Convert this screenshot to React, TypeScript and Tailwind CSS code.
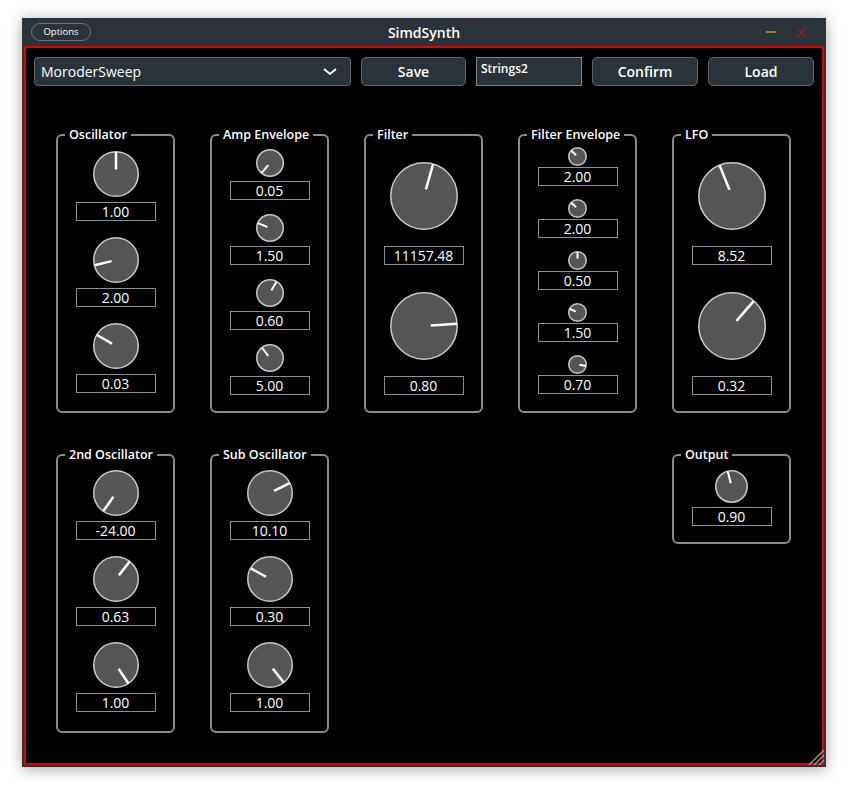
import React from 'react';

// Pointer angle is degrees clockwise from 12 o'clock
function Knob({ size, angle }: { size: number; angle: number }) {
    const r = size / 2;
    const rad = (angle * Math.PI) / 180;
    const x1 = r + Math.sin(rad) * r * 0.2;
    const y1 = r - Math.cos(rad) * r * 0.2;
    const x2 = r + Math.sin(rad) * (r - 1);
    const y2 = r - Math.cos(rad) * (r - 1);
    const sw = size > 40 ? 2.5 : 2;
    return (
        <svg width={size} height={size} viewBox={`0 0 ${size} ${size}`} className="shrink-0">
            <circle cx={r} cy={r} r={r - 0.75} fill="#555555" stroke="#c9c9c9" strokeWidth={1.5} />
            <line x1={x1} y1={y1} x2={x2} y2={y2} stroke="#ffffff" strokeWidth={sw} />
        </svg>
    );
}

function Value({ children }: { children: React.ReactNode }) {
    return (
        <div className="w-[80px] h-[19px] border border-[#8a9295] flex items-center justify-center text-[14px] leading-none font-medium text-white">
            {children}
        </div>
    );
}

function Param({ size, angle, value, gap }: { size: number; angle: number; value: string; gap: string }) {
    return (
        <div className={`flex flex-col items-center ${gap}`}>
            <Knob size={size} angle={angle} />
            <Value>{value}</Value>
        </div>
    );
}

function Panel({ title, className, children }: { title: string; className: string; children: React.ReactNode }) {
    return (
        <fieldset className={`border-2 border-[#868d91] rounded-[6px] ${className}`}>
            <legend className="ml-[7px] px-[4px] text-[12.5px] leading-[16px] font-semibold text-white">{title}</legend>
            {children}
        </fieldset>
    );
}

function Button({ label }: { label: string }) {
    return (
        <button className="w-[106px] h-[29px] rounded-[5px] bg-[#2a3339] border border-[#5d656a] text-[14px] font-semibold text-white">
            {label}
        </button>
    );
}

export default function App() {
    return (
        <div className="min-h-[794px] bg-white pt-[18px] pl-[22px] font-['Open_Sans',sans-serif]">
            <div className="relative w-[804px] h-[749px] bg-[#2a3339] shadow-[0_2px_14px_rgba(0,0,0,0.35)] flex flex-col">
                {/* Title bar */}
                <div className="h-[28px] shrink-0 grid grid-cols-[1fr_auto_1fr] items-center px-[9px]">
                    <button className="justify-self-start w-[60px] h-[18px] rounded-full border border-[#6b7378] text-[9.5px] font-medium text-white leading-none">
                        Options
                    </button>
                    <div className="text-[14px] font-semibold text-white">SimdSynth</div>
                    <div className="justify-self-end flex items-center gap-[20px] pr-[10px]">
                        <div className="w-[10px] h-[2px] bg-[#9a8620]" />
                        <svg width="11" height="11" viewBox="0 0 11 11">
                            <path d="M1 1 L10 10 M10 1 L1 10" stroke="#8a2022" strokeWidth="1.6" />
                        </svg>
                    </div>
                </div>

                {/* Content */}
                <div className="flex-1 mx-[2px] mb-[2px] border-2 border-[#e30000] bg-black flex flex-col">
                    <div className="flex gap-[10px] pt-[9px] px-[8px]">
                        <div className="w-[317px] h-[29px] rounded-[4px] bg-[#2a3339] border border-[#5d656a] flex items-center justify-between pl-[6px] pr-[13px]">
                            <span className="text-[14px] font-medium text-white">MoroderSweep</span>
                            <svg width="14" height="7" viewBox="0 0 14 7">
                                <path d="M1 1 L7 6 L13 1" fill="none" stroke="#ffffff" strokeWidth="1.8" />
                            </svg>
                        </div>
                        <button className="w-[105px] h-[29px] rounded-[5px] bg-[#2a3339] border border-[#5d656a] text-[14px] font-semibold text-white">
                            Save
                        </button>
                        <div className="w-[106px] h-[29px] bg-[#2a3339] border border-[#7d8589] px-[4px] pt-[3px] text-[12px] font-semibold text-white leading-[16px]">
                            Strings2
                        </div>
                        <Button label="Confirm" />
                        <Button label="Load" />
                    </div>

                    <div className="ml-[30px] mt-[41px] grid grid-cols-[repeat(5,119px)] gap-x-[35px] gap-y-[34px] items-start">
                        <Panel title="Oscillator" className="h-[286px] flex flex-col items-center gap-[16px] pt-[8px]">
                            <Param size={46} angle={0} value="1.00" gap="gap-[5px]" />
                            <Param size={46} angle={-104} value="2.00" gap="gap-[5px]" />
                            <Param size={46} angle={-60} value="0.03" gap="gap-[5px]" />
                        </Panel>
                        <Panel title="Amp Envelope" className="h-[286px] flex flex-col items-center gap-[14px] pt-[6px]">
                            <Param size={28} angle={-140} value="0.05" gap="gap-[4px]" />
                            <Param size={28} angle={-68} value="1.50" gap="gap-[4px]" />
                            <Param size={28} angle={30} value="0.60" gap="gap-[4px]" />
                            <Param size={28} angle={-38} value="5.00" gap="gap-[4px]" />
                        </Panel>
                        <Panel title="Filter" className="h-[286px] flex flex-col items-center gap-[27px] pt-[19px]">
                            <Param size={68} angle={16} value="11157.48" gap="gap-[16px]" />
                            <Param size={68} angle={86} value="0.80" gap="gap-[16px]" />
                        </Panel>
                        <Panel title="Filter Envelope" className="h-[286px] flex flex-col items-center gap-[13px] pt-[4px]">
                            <Param size={19} angle={-47} value="2.00" gap="gap-[1px]" />
                            <Param size={19} angle={-47} value="2.00" gap="gap-[1px]" />
                            <Param size={19} angle={0} value="0.50" gap="gap-[1px]" />
                            <Param size={19} angle={-64} value="1.50" gap="gap-[1px]" />
                            <Param size={19} angle={100} value="0.70" gap="gap-[1px]" />
                        </Panel>
                        <Panel title="LFO" className="h-[286px] flex flex-col items-center gap-[27px] pt-[19px]">
                            <Param size={68} angle={-22} value="8.52" gap="gap-[16px]" />
                            <Param size={68} angle={41} value="0.32" gap="gap-[16px]" />
                        </Panel>

                        <Panel title="2nd Oscillator" className="h-[286px] flex flex-col items-center gap-[16px] pt-[7px]">
                            <Param size={46} angle={-145} value="-24.00" gap="gap-[5px]" />
                            <Param size={46} angle={38} value="0.63" gap="gap-[5px]" />
                            <Param size={46} angle={146} value="1.00" gap="gap-[5px]" />
                        </Panel>
                        <Panel title="Sub Oscillator" className="h-[286px] flex flex-col items-center gap-[16px] pt-[7px]">
                            <Param size={46} angle={63} value="10.10" gap="gap-[5px]" />
                            <Param size={46} angle={-61} value="0.30" gap="gap-[5px]" />
                            <Param size={46} angle={142} value="1.00" gap="gap-[5px]" />
                        </Panel>
                        <div />
                        <div />
                        <Panel title="Output" className="h-[97px] flex flex-col items-center pt-[7px]">
                            <Param size={33} angle={-14} value="0.90" gap="gap-[4px]" />
                        </Panel>
                    </div>
                </div>

                {/* resize grip */}
                <svg width="18" height="18" viewBox="0 0 18 18" className="absolute right-[1px] bottom-[1px]">
                    <path d="M2 17 L17 2 M7 17 L17 7 M12 17 L17 12" stroke="#9aa0a4" strokeWidth="1.4" />
                </svg>
            </div>
        </div>
    );
}
